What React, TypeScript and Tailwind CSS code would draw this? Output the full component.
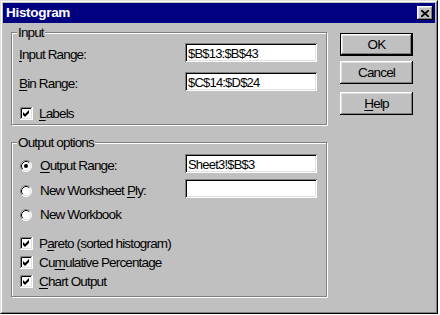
const font = "font-['Liberation_Sans',Arial,sans-serif]";

const sunken =
  "shadow-[inset_1px_1px_0_#808080,inset_-1px_-1px_0_#fff,inset_2px_2px_0_#000,inset_-2px_-2px_0_#dfdfdf]";
const raised =
  "shadow-[inset_-1px_-1px_0_#000,inset_1px_1px_0_#fff,inset_-2px_-2px_0_#808080,inset_2px_2px_0_#dfdfdf]";
const etched = "border border-[#808080] shadow-[1px_1px_0_#fff,inset_1px_1px_0_#fff]";

function CheckBox() {
  return (
    <svg width="13" height="13" viewBox="0 0 13 13" className="shrink-0">
      <rect x="0" y="0" width="13" height="13" fill="#fff" />
      <path d="M0.5 12 V0.5 H12" stroke="#808080" fill="none" />
      <path d="M1.5 11 V1.5 H11" stroke="#000" fill="none" />
      <path d="M0 12.5 H12.5 V0" stroke="#fff" fill="none" />
      <path d="M1.5 11.5 H11.5 V1.5" stroke="#dfdfdf" fill="none" />
      <polygon points="3,5 5,7 9,3 9,6 5,10 3,8" fill="#000" />
    </svg>
  );
}

function Radio({ on }: { on?: boolean }) {
  return (
    <svg width="12" height="12" viewBox="0 0 12 12" className="shrink-0">
      <circle cx="6" cy="6" r="5.5" fill="#fff" />
      <path d="M2.11 9.89 A5.5 5.5 0 0 1 9.89 2.11" stroke="#808080" fill="none" />
      <path d="M9.89 2.11 A5.5 5.5 0 0 1 2.11 9.89" stroke="#fff" fill="none" />
      <path d="M2.82 9.18 A4.5 4.5 0 0 1 9.18 2.82" stroke="#000" fill="none" />
      <path d="M9.18 2.82 A4.5 4.5 0 0 1 2.82 9.18" stroke="#dfdfdf" fill="none" />
      {on && <circle cx="6" cy="6" r="2" fill="#000" />}
    </svg>
  );
}

function Field({ value }: { value: string }) {
  return (
    <div
      className={`w-[132px] h-[19px] bg-white ${sunken} flex items-center pl-[3px] pt-px text-[13px] tracking-[-0.8px] leading-none`}
    >
      {value}
    </div>
  );
}

function Button({ label, u, main }: { label: string; u?: number; main?: boolean }) {
  const txt =
    u === undefined ? (
      label
    ) : (
      <>
        {label.slice(0, u)}
        <span className="underline underline-offset-[2px]">{label[u]}</span>
        {label.slice(u + 1)}
      </>
    );
  return (
    <div className={`w-[73px] h-[23px] ${main ? "border border-black" : ""}`}>
      <div className={`w-full h-full bg-[#c0c0c0] ${raised} flex items-center justify-center pt-px`}>
        {txt}
      </div>
    </div>
  );
}

function U({ pre, ch, post }: { pre?: string; ch: string; post?: string }) {
  return (
    <span className="whitespace-pre">
      {pre}
      <span className="underline underline-offset-[2px]">{ch}</span>
      {post}
    </span>
  );
}

export default function App() {
  return (
    <div className={`w-[440px] h-[315px] bg-white ${font} text-black`}>
      <div className="w-[438px] h-[314px] border border-t-[#dfdfdf] border-l-[#dfdfdf] border-b-black border-r-black">
        <div className="w-full h-full border border-t-white border-l-white border-b-[#808080] border-r-[#808080] bg-[#c0c0c0] p-px flex flex-col">
          {/* title bar */}
          <div className="h-[20px] bg-[#000080] flex items-center justify-between pl-[3px] pr-[2px]">
            <span className="text-white font-bold text-[13.5px] tracking-[-0.3px] leading-none">Histogram</span>
            <div className={`w-[16px] h-[14px] bg-[#c0c0c0] ${raised} flex items-center justify-center`}>
              <svg width="8" height="7" viewBox="0 0 8 7">
                <path d="M0 0 L8 7 M8 0 L0 7" stroke="#000" strokeWidth="1.8" />
              </svg>
            </div>
          </div>

          {/* body */}
          <div className="flex pl-[8px] text-[13.5px] tracking-[-0.85px] leading-none">
            <div className="w-[316px]">
              {/* Input */}
              <div className={`relative mt-[9px] h-[93px] ${etched} pt-[10px] pl-[7px] pr-[9px]`}>
                <span className="absolute -top-[7px] left-[5px] bg-[#c0c0c0] px-px">Input</span>
                <div className="h-[19px] flex items-center justify-between">
                  <span className="pt-[4px]">
                    <U ch="I" post="nput Range:" />
                  </span>
                  <Field value="$B$13:$B$43" />
                </div>
                <div className="h-[19px] mt-[10px] flex items-center justify-between">
                  <span className="pt-[4px]">
                    <U ch="B" post="in Range:" />
                  </span>
                  <Field value="$C$14:$D$24" />
                </div>
                <div className="h-[19px] mt-[13px] flex items-center gap-[6px] pl-px">
                  <CheckBox />
                  <U ch="L" post="abels" />
                </div>
              </div>

              {/* Output options */}
              <div className={`relative mt-[17px] h-[155px] ${etched} pt-[11px] pl-[7px] pr-[9px]`}>
                <span className="absolute -top-[7px] left-[5px] bg-[#c0c0c0] px-px">Output options</span>
                <div className="h-[19px] flex items-center justify-between">
                  <div className="flex items-center gap-[8px] pl-[1px] pt-[5px]">
                    <Radio on />
                    <U ch="O" post="utput Range:" />
                  </div>
                  <Field value="Sheet3!$B$3" />
                </div>
                <div className="h-[19px] mt-[6px] flex items-center justify-between">
                  <div className="flex items-center gap-[8px] pl-[1px] pt-[4px]">
                    <Radio />
                    <U pre="New Worksheet " ch="P" post="ly:" />
                  </div>
                  <Field value="" />
                </div>
                <div className="h-[19px] mt-[7px] flex items-center gap-[8px] pl-[1px]">
                  <Radio />
                  <span>New Workbook</span>
                </div>
                <div className="mt-[10px] flex flex-col pl-px">
                  <div className="h-[19px] flex items-center gap-[6px]">
                    <CheckBox />
                    <U pre="P" ch="a" post="reto (sorted histogram)" />
                  </div>
                  <div className="h-[19px] flex items-center gap-[6px]">
                    <CheckBox />
                    <U pre="Cu" ch="m" post="ulative Percentage" />
                  </div>
                  <div className="h-[19px] flex items-center gap-[6px]">
                    <CheckBox />
                    <U ch="C" post="hart Output" />
                  </div>
                </div>
              </div>
            </div>

            {/* buttons */}
            <div className="ml-[13px] mt-[10px] flex flex-col">
              <Button label="OK" main />
              <div className="mt-[5px]">
                <Button label="Cancel" />
              </div>
              <div className="mt-[8px]">
                <Button label="Help" u={0} />
              </div>
            </div>
          </div>
        </div>
      </div>
    </div>
  );
}
